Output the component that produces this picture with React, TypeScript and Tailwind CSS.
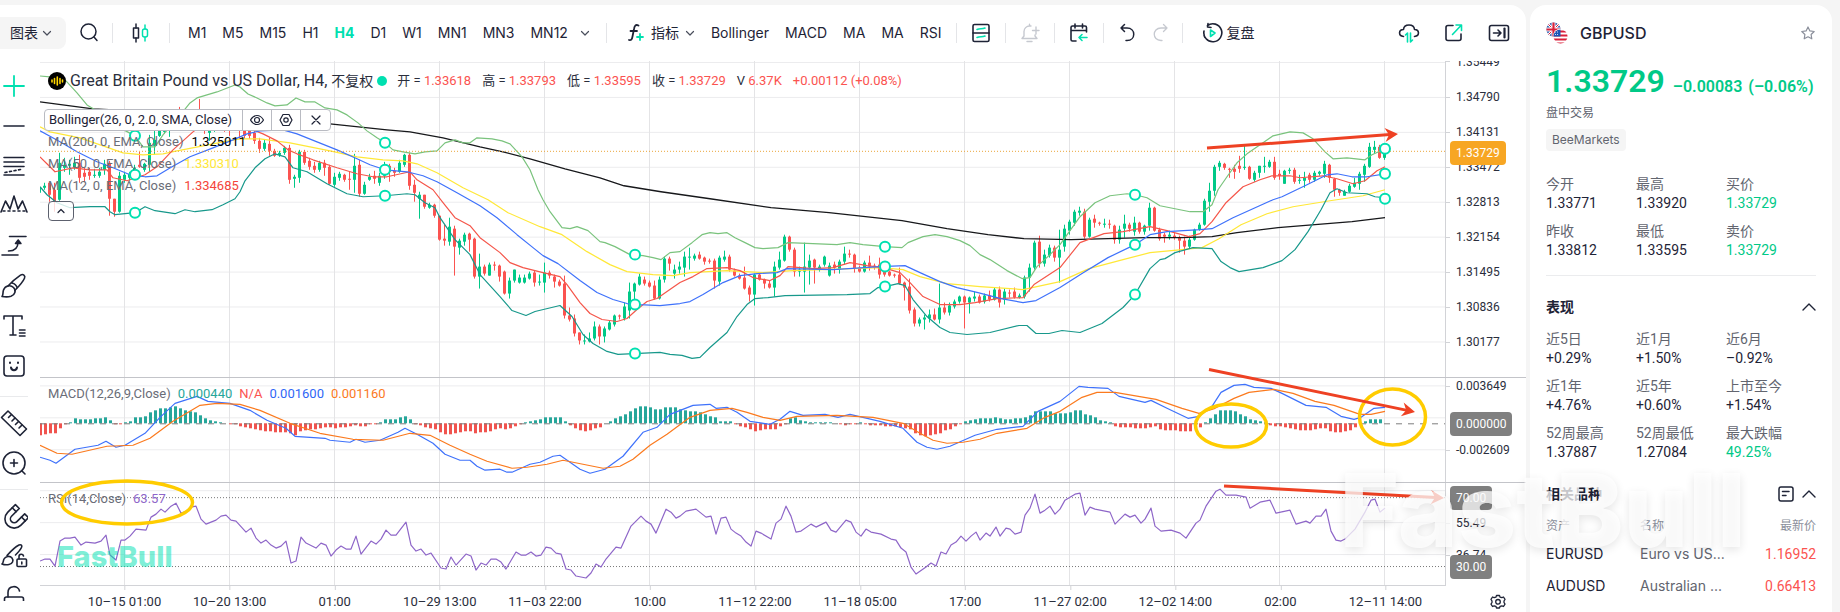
import React from "react";

/* ------------------------------------------------------------------ */
/* Chart space: x 40..1445, y 61..586, one bar every 5 units           */
/* ------------------------------------------------------------------ */
const X0 = 40;
const Y0 = 61;
const PLOT_W = 1405;
const PLOT_H = 525;

// colour, high, body top, body bottom, low
const CANDLES = `g185,188,193,195 g183,186,188,190 r182,183,195,202 r183,190,202,212 g153,163,200,201 g158,165,168,172 g160,164,166,175 g157,163,168,170 r155,163,178,183 r168,173,177,182
r168,172,176,180 g169,175,176,178 g168,172,176,178 g160,164,170,175 r161,163,199,216 r199,199,212,217 g172,176,212,213 g172,175,180,183 g172,174,178,181 g165,168,172,180
r152,165,167,168 g163,164,170,172 g135,143,165,172 g130,140,146,155 g127,128,136,137 g125,127,132,134 g122,125,131,137 g112,115,128,130 r107,112,124,128 g110,112,125,130
g112,116,120,126 g110,113,121,125 r99,112,126,129 r112,116,131,134 g120,123,133,141 g115,120,129,132 g115,118,126,130 r115,120,128,132 r120,124,131,136 g118,120,128,130
r118,126,131,139 r120,128,136,139 r125,129,136,139 r131,133,141,144 r138,141,149,153 g140,143,149,151 r138,144,151,156 r149,151,156,157 g151,153,155,157 g146,148,153,155
r145,148,180,184 g175,177,179,188 g150,152,178,183 r150,152,163,165 r158,161,167,170 r162,166,170,173 g161,163,170,172 r160,163,168,176 r165,167,184,185 g173,177,185,187
g172,174,178,181 r174,175,180,182 r172,179,180,190 g154,166,180,193 r160,165,194,197 g182,185,194,195 g174,177,180,181 r171,176,179,184 g173,176,183,186 g162,167,176,179
r164,166,172,182 r168,171,173,177 g160,163,172,173 g154,155,165,167 r153,155,186,190 r180,185,193,202 g192,195,199,219 r195,195,207,209 g203,205,208,209 r204,205,216,218
r216,216,240,241 r225,239,241,246 g218,227,242,246 r226,229,247,276 g239,241,248,255 g233,235,242,246 r233,234,240,252 r238,239,277,279 g254,267,277,289 r265,267,274,276
g263,265,276,276 r262,265,266,271 r265,266,277,282 r271,272,294,295 g278,281,294,299 g270,270,281,283 g275,278,283,284 g275,278,283,284 g272,274,279,280 r271,273,283,287
g275,282,283,286 g263,273,283,293 r271,273,276,279 r275,277,282,288 r280,282,286,287 r276,284,316,319 r308,316,320,322 r315,319,334,337 r333,333,341,345 g335,341,342,345
g333,339,342,343 g322,327,339,341 r325,327,337,345 g327,329,337,343 g321,323,330,331 g315,316,325,327 r315,316,317,320 g303,307,319,321 g283,292,311,319 g283,284,292,301
g274,277,285,286 r277,280,284,286 r281,283,287,288 r281,286,299,300 g277,280,299,300 g257,259,280,283 r257,259,264,271 g265,270,274,279 g262,267,270,274 g252,257,268,277
g248,257,258,270 g254,256,259,261 r252,255,259,260 r257,258,262,265 r259,261,262,264 r259,261,281,289 g256,258,282,286 g251,257,260,262 r255,257,270,272 r269,271,276,277
r274,276,279,280 r267,278,289,290 r286,288,295,302 g274,275,295,306 r273,275,280,281 r279,280,284,289 r281,284,288,289 g262,267,288,297 g252,260,268,270 g235,237,261,262
r236,237,250,252 r248,250,272,277 g267,270,272,277 g243,267,272,293 g255,261,268,285 r259,260,268,284 g265,267,270,272 g256,257,265,267 g263,266,276,277 r262,265,268,274
g260,262,270,274 g247,254,262,265 r250,254,255,258 r254,255,269,273 r266,268,272,273 g261,263,272,273 r256,263,267,271 r264,266,268,270 r258,265,275,279 r270,272,275,277
r271,272,276,277 r274,275,276,278 r268,275,284,285 r282,283,288,301 r279,287,311,314 r308,310,324,327 g318,320,324,327 g315,318,320,330 g310,315,319,323 r309,315,320,321
g284,308,320,324 r303,308,313,315 g303,306,313,316 g300,302,307,309 g296,297,302,304 r296,297,303,329 g297,298,303,314 g292,297,299,302 r295,297,303,304 g294,296,302,304
r291,296,300,302 g288,290,300,301 r287,290,303,308 g289,292,300,305 r290,293,294,298 r288,292,298,299 g294,296,298,299 g276,278,297,299 g264,268,278,292 g241,243,268,270
r236,242,264,268 g250,255,264,267 g245,248,256,258 r246,248,258,262 g230,250,258,283 g225,229,247,252 g220,222,231,235 g210,212,223,226 g207,211,213,216 r209,212,237,239
g218,220,237,238 r215,219,223,228 r222,223,224,226 g219,224,225,228 r220,224,225,229 r225,226,240,244 g226,230,240,244 g215,224,229,238 r223,225,229,232 g217,223,232,236
r222,223,232,234 g225,226,232,235 g203,208,226,231 r207,208,231,232 r228,230,239,241 r233,235,237,243 g231,235,237,240 r233,236,238,240 r236,238,241,253 r237,241,247,255
g236,240,247,249 g229,230,240,241 g223,225,230,231 g199,201,225,226 g183,191,202,212 g165,167,191,196 g161,163,167,171 r163,164,168,170 r168,169,170,178 r165,169,172,179
r156,166,169,173 g146,167,168,170 r166,167,179,180 g171,173,180,182 g166,166,173,178 g157,166,167,173 g160,162,167,168 r157,162,178,180 r170,174,176,180 g170,171,184,184
g168,170,171,174 r168,170,182,184 g175,180,181,184 g172,178,181,188 r173,175,180,183 g171,173,180,182 g171,172,174,176 g161,164,174,178 r164,165,178,183 r178,179,190,197
r189,190,193,196 g190,192,196,196 g184,186,192,193 g178,183,187,188 g172,174,184,190 g164,166,175,182 g143,147,167,168 g141,147,150,154 r145,147,158,159 g153,154,158,160`
  .split(/\s+/)
  .map((c) => ({ up: c[0] === "g", v: c.slice(1).split(",").map(Number) }));

const HISTOGRAM = [
  -12, -11, -10, -10, -5, -1, 1, 5, 4, 4, 4, 5, 5, 6, 3, -1, -1, 1, 2, 6, 6, 7, 11, 13, 15, 15, 16, 17, 15, 13,
  12, 11, 8, 5, 3, 2, 1, 0, -1, -1, -3, -4, -5, -6, -7, -8, -8, -9, -9, -9, -10, -12, -8, -7, -6, -6, -5, -4, -4, -5,
  -4, -4, -3, -2, -3, -3, -1, -1, 1, 4, 4, 4, 6, 7, 4, -1, -2, -4, -5, -6, -9, -11, -11, -10, -9, -8, -8, -10, -9, -9,
  -8, -6, -5, -6, -5, -3, -1, 1, 2, 3, 4, 6, 6, 6, 6, 2, -2, -5, -7, -8, -7, -5, -4, 0, 2, 5, 7, 9, 12, 15,
  17, 17, 16, 14, 14, 16, 16, 16, 14, 13, 12, 12, 11, 9, 7, 6, 2, 2, 2, -1, -3, -4, -6, -8, -7, -6, -6, -6, -3, -1,
  5, 6, 3, 2, 1, 1, 1, 1, 1, 0, -1, -2, -1, -1, 1, -1, -2, -2, -2, -3, -3, -3, -4, -5, -6, -10, -12, -13, -12, -11,
  -10, -7, -6, -3, -1, 2, 3, 4, 5, 5, 5, 6, 5, 4, 4, 5, 5, 6, 8, 12, 12, 12, 12, 10, 10, 10, 11, 13, 13, 9,
  8, 6, 3, 2, 1, -3, -4, -4, -4, -5, -5, -5, -4, -3, -6, -7, -7, -7, -8, -8, -8, -5, -4, 1, 5, 9, 13, 13, 13, 12,
  9, 7, 4, 3, 2, 1, -2, -3, -3, -4, -5, -6, -7, -7, -7, -6, -5, -5, -8, -9, -9, -8, -7, -4, -1, 2, 4, 4, 4,
];

const UPPER =
  "40,76 50,77 66,81 77,93 87,105 97,111 120,128 135,136 143,147 155,147 163,135 182,113 190,103 197,98 217,92 235,85 240,87 248,94 257,98 267,103 275,106 287,105 296,98 305,102 315,102 325,108 337,110 347,115 358,123 367,131 377,138 385,143 393,150 403,152 415,154 425,152 437,151 445,143 455,140 463,143 470,143 477,138 492,139 502,141 510,144 522,157 530,170 538,190 543,200 550,212 562,228 570,229 577,227 588,231 600,242 605,243 615,247 630,255 643,256 653,258 661,260 670,253 680,252 692,243 702,235 710,233 718,234 727,233 735,238 745,243 755,248 763,249 778,248 788,243 813,244 837,245 850,243 863,245 885,247 902,248 908,243 923,237 935,235 947,237 960,241 970,246 980,255 990,260 1007,271 1022,279 1030,278 1037,267 1050,255 1060,245 1080,217 1095,203 1110,196 1127,194 1135,195 1147,198 1160,206 1180,210 1190,212 1203,212 1212,205 1218,190 1227,177 1237,163 1247,154 1263,143 1273,136 1290,132 1303,133 1313,139 1325,152 1333,159 1347,158 1365,160 1372,155 1385,149";
const MIDDLE =
  "40,131 60,142 77,152 97,162 113,168 130,175 145,177 157,176 172,167 190,157 213,148 233,140 247,134 260,131 283,130 297,134 317,142 337,150 357,159 370,165 385,170 407,172 423,176 437,182 457,193 480,206 497,218 517,235 533,248 543,256 558,264 580,281 597,293 613,300 627,304 640,305 660,306 680,304 690,302 703,295 723,283 740,276 757,274 777,273 787,269 833,270 880,267 905,266 920,273 940,282 957,288 978,293 1001,299 1023,303 1036,301 1060,288 1082,274 1108,258 1135,245 1150,235 1167,232 1200,230 1212,229 1233,218 1273,200 1282,197 1307,185 1327,175 1337,174 1352,177 1367,177 1385,174";
const LOWER =
  "40,187 47,195 57,203 70,208 90,207 105,207 110,212 115,215 135,213 145,207 155,211 175,214 185,210 195,212 212,210 223,205 235,199 240,192 245,181 255,168 265,159 275,154 285,157 293,168 307,172 327,184 347,194 363,197 385,196 407,194 415,195 425,203 435,208 440,218 455,240 470,255 480,275 500,297 512,311 526,316 535,312 560,306 572,317 583,335 593,344 607,352 618,355 660,353 670,355 682,356 692,359 700,358 710,348 727,333 737,317 747,305 755,299 768,298 785,296 847,295 870,294 878,288 885,287 898,284 905,286 913,300 927,317 940,328 950,333 967,335 990,333 1019,326 1027,326 1036,334 1049,334 1062,331 1080,333 1102,324 1123,308 1135,295 1150,269 1160,260 1165,259 1175,253 1193,248 1212,249 1221,262 1230,268 1239,272 1263,268 1282,261 1295,250 1308,232 1321,210 1330,193 1337,189 1347,193 1367,194 1375,197 1385,198";
const EMA200 =
  "40,102 93,109 200,114 330,124 387,130 410,132 443,138 480,147 503,152 530,159 565,169 600,178 624,186 661,192 710,199 771,208 829,213 902,221 947,229 988,235 1024,239 1071,240 1145,238 1182,238 1212,237 1237,233 1278,228 1352,222 1385,218";
const EMA50 =
  "40,127 50,132 80,138 103,146 123,153 143,155 163,154 177,151 203,146 223,142 240,139 260,139 290,143 330,151 357,157 383,160 403,161 417,164 437,173 463,188 488,200 508,213 540,227 562,235 587,252 610,265 627,272 653,275 673,276 690,273 727,271 763,273 793,271 880,268 903,270 920,277 947,284 980,287 1023,290 1060,282 1089,269 1123,260 1150,253 1182,250 1202,248 1219,239 1241,225 1267,214 1293,207 1330,201 1350,198 1363,196 1385,190";
const EMA12 =
  "40,157 55,172 73,168 90,170 107,170 113,178 127,181 145,175 157,167 173,150 193,132 200,127 215,120 235,123 250,129 263,134 277,141 288,150 297,154 313,160 337,168 357,174 373,177 387,177 410,172 417,180 433,190 443,203 455,218 470,226 480,238 500,253 510,263 523,268 543,273 560,277 567,285 580,303 590,314 602,320 617,322 627,319 637,310 647,302 657,299 667,292 680,283 693,277 707,269 727,268 740,271 753,278 770,281 780,276 788,267 813,269 833,268 850,263 867,266 883,268 900,273 910,283 923,297 940,305 960,305 975,303 997,299 1023,298 1034,285 1060,268 1080,243 1104,234 1123,232 1150,227 1167,231 1189,237 1200,234 1212,222 1226,203 1243,187 1260,180 1272,176 1290,176 1300,178 1323,176 1337,179 1353,184 1365,181 1377,171 1385,167";
const MACD_LINE =
  "40,458 50,461 56,464 75,450 98,446 106,442 116,448 125,446 145,434 160,418 175,404 197,397 208,402 230,404 250,411 267,421 286,429 295,437 325,439 330,441 350,443 356,440 365,443 380,441 398,433 405,429 417,435 433,444 445,455 460,461 470,461 477,467 485,471 500,470 507,473 512,473 530,465 540,463 553,457 560,456 580,470 590,474 605,470 623,457 643,433 657,428 670,415 693,406 710,405 716,409 727,408 737,413 750,422 770,425 780,420 790,412 803,416 825,415 838,418 850,415 880,422 903,429 917,443 927,448 937,450 950,447 975,436 997,430 1023,427 1038,412 1060,402 1079,387 1088,388 1108,389 1119,397 1145,403 1151,401 1167,409 1188,419 1199,417 1212,407 1221,393 1234,386 1245,385 1254,388 1271,389 1282,394 1306,406 1326,408 1341,417 1354,420 1361,418 1374,409 1385,408";
const SIGNAL_LINE =
  "40,446 57,454 72,455 107,447 133,446 150,439 173,422 200,406 217,404 240,405 260,411 290,424 320,434 353,440 383,441 410,434 430,436 450,446 470,455 487,462 512,469 527,468 547,465 563,461 583,465 603,469 620,467 633,460 650,446 667,435 690,418 710,411 732,409 747,413 763,418 780,421 797,417 837,416 873,418 903,424 920,434 933,441 947,444 963,443 980,440 997,434 1027,429 1045,418 1060,412 1082,398 1097,393 1115,393 1156,400 1182,409 1199,414 1215,409 1234,399 1249,393 1274,390 1293,394 1315,402 1334,406 1360,415 1371,415 1385,412";
const RSI_LINE =
  "40,562 45,560 50,560 55,567 60,542 65,539 70,539 75,538 81,546 86,543 95,544 101,542 106,536 110,556 116,561 121,541 125,541 130,537 136,530 146,531 151,518 156,515 161,510 165,513 171,507 176,504 181,514 187,512 191,508 196,507 201,520 206,525 216,521 221,517 226,516 231,521 236,522 246,533 251,529 256,539 261,544 266,541 271,546 276,549 281,547 286,542 291,564 296,562 301,538 306,544 316,549 321,544 326,546 331,557 336,551 341,547 346,550 351,550 356,537 361,555 371,542 376,545 381,540 386,531 391,536 396,536 406,523 411,546 416,552 421,550 426,556 431,554 441,569 446,570 451,558 456,566 466,555 471,557 476,571 481,564 486,566 491,560 496,560 501,563 506,570 516,553 521,556 526,556 531,553 536,557 541,556 546,548 551,549 556,554 561,555 566,570 571,571 576,577 586,579 591,574 596,565 601,568 606,560 616,548 621,549 631,527 641,517 646,522 651,525 656,534 666,510 671,513 676,519 680,517 686,512 696,510 706,518 711,517 716,535 721,519 726,518 731,530 736,534 741,537 746,543 751,547 756,532 761,534 771,540 776,524 781,520 786,507 791,517 796,533 801,532 811,525 816,528 826,523 831,531 836,533 846,521 851,523 856,533 861,537 866,530 871,533 881,535 891,540 896,541 901,549 906,553 911,568 916,575 926,568 931,564 936,567 941,553 946,555 951,546 956,543 961,537 966,542 971,537 976,533 980,541 986,534 990,537 996,528 1000,537 1006,529 1010,530 1015,535 1021,533 1025,516 1030,509 1035,495 1040,514 1045,511 1050,507 1055,515 1060,510 1065,501 1075,495 1080,494 1085,516 1090,508 1095,510 1110,513 1115,525 1125,515 1130,518 1135,516 1141,524 1145,520 1151,509 1155,527 1161,532 1171,531 1180,534 1186,539 1196,524 1200,521 1206,507 1216,492 1220,490 1226,496 1236,496 1246,498 1250,509 1260,503 1270,501 1276,514 1290,511 1296,525 1306,522 1310,524 1316,517 1321,517 1326,510 1331,532 1336,541 1341,542 1345,540 1355,530 1365,513 1371,501 1375,500 1380,513 1385,509";

const HANDLES = [
  [135, 136], [135, 175], [135, 213], [385, 143], [385, 170], [385, 196],
  [635, 255], [635, 305], [635, 354], [885, 247], [885, 267], [885, 287],
  [1135, 195], [1135, 245], [1135, 295], [1385, 149], [1385, 174], [1385, 199],
];

const GRID_X = Array.from({ length: 13 }, (_, i) => 124.5 + i * 105);
const GRID_Y = [62.5, 97.5, 132.5, 167.5, 202.5, 237.5, 272.5, 307.5, 342.5, 386.5, 418.5, 450.5, 491.5, 523.5, 555.5];

const AXIS_LABELS: [string, number][] = [
  ["1.35449", 62], ["1.34790", 97], ["1.34131", 132], ["1.33472", 167], ["1.32813", 202], ["1.32154", 237],
  ["1.31495", 272], ["1.30836", 307], ["1.30177", 342], ["0.003649", 386], ["-0.002609", 450], ["55.49", 523], ["36.74", 555],
];

const TIMES = [
  "10–15 01:00", "10–20 13:00", "01:00", "10–29 13:00", "11–03 22:00", "10:00", "11–12 22:00",
  "11–18 05:00", "17:00", "11–27 02:00", "12–02 14:00", "02:00", "12–11 14:00",
];

const pctY = (y: number) => `${((y - Y0) / PLOT_H) * 100}%`;
const pctX = (x: number) => `${((x - X0) / PLOT_W) * 100}%`;

/* ------------------------------------------------------------------ */
/* Icons                                                               */
/* ------------------------------------------------------------------ */
const INK = "#1e2336";
const MINT = "#00e0b0";

function Icon({ w = 20, h = 20, sw = 1.6, color = INK, children }: {
  w?: number; h?: number; sw?: number; color?: string; children: React.ReactNode;
}) {
  return (
    <svg className="block shrink-0" width={w} height={h} viewBox={`0 0 ${w} ${h}`} fill="none" stroke={color}
      strokeWidth={sw} strokeLinecap="round" strokeLinejoin="round" aria-hidden="true">
      {children}
    </svg>
  );
}

const Chevron = () => (
  <Icon w={10} h={10} sw={1.2} color="#4a4e5c"><path d="M1.5 3.5 5 7l3.5-3.5" /></Icon>
);
const ChevronUp = () => (
  <Icon w={14} h={14} sw={1.4}><path d="M1 10l6-6 6 6" /></Icon>
);
const Divider = () => <span className="h-5 w-px shrink-0 bg-[#e4e5e8]" />;

const TOOLS: { label: string; icon: React.ReactNode }[][] = [
  [
    { label: "十字光标", icon: <path d="M14 4v20M4 14h20" stroke={MINT} strokeWidth="1.8" /> },
    { label: "线段", icon: <path d="M4 14h20" /> },
    { label: "平行线", icon: <><path d="M4 5.5h20M4 10h20M4 14.5h20M4 23h20" /><path d="M5 20.5 23 17" strokeDasharray="2 2.6" /></> },
    { label: "形态", icon: <><path d="M1 20 5.500 9l4.500 8L14 4l4 13 4.500-8L27 20" /><path d="M3 19h22" strokeDasharray="2 3" /></> },
    { label: "预测", icon: <><path d="M9.500 4.500H26M2 23h16M8.500 19c7 0 9.500-3.500 9.500-9" /><path d="m15.500 11.500 2.700-3.500 2.700 3.500z" fill={INK} /></> },
    { label: "画笔", icon: <><path d="M2 24.500c1.500-1.500.500-3.500 1.500-6.500 1.500-4.500 7-5.500 10-2.500s1.500 7.500-2.500 8.800c-3 .900-6 .700-9 .200z" /><path d="M8 14C12 9.500 16.500 6 20.500 3.200c2.500-1.700 5.200.300 4 3-1.700 4-5.500 8-9.700 12.300M12 11c2 .5 4.500 2.500 5.200 5" /></> },
    { label: "文字", icon: <><path d="M4 7V4h18v3M13 4v19M10 23h6" /><path d="M19.500 18H25M19.500 21H25M19.500 24H25" /></> },
    { label: "表情", icon: <><rect x="4" y="4" width="20" height="20" rx="3" /><path d="M10 10.500v.5M18 10.500v.5M11 15.500c.5 3.500 5.500 3.500 6 0" strokeWidth="2" /></> },
  ],
  [
    { label: "测量", icon: <><path d="M8 2 26.500 20 20 26.500 1.500 8.500z" /><path d="m11.500 5.500-3 3M15 9l-3 3M18.500 12.500l-3 3M22 16l-3 3" /></> },
    { label: "放大", icon: <><circle cx="14" cy="14" r="11" /><path d="m21.500 21.500 3.500 3.500M14 10.500v7M10.500 14h7" /></> },
  ],
  [
    { label: "磁铁", icon: <g transform="translate(1 1) rotate(45 13 15)"><path d="M4.500 4.500h5.500v11a3.800 3.800 0 0 0 7.600 0v-11H23v11a9.250 9.250 0 0 1-18.500 0z" /><path d="M4.500 9H10M17.600 9H23" /></g> },
    { label: "锁定画笔", icon: <><path d="M2 22c1.500-1 1-3 2-5 1.500-3 6-3.500 8-1s.5 6-3 6.500c-2.500.5-5 .3-7-.5zM7 13.500C11 9 15 5 19 3c2-.8 3.500.5 2.500 2.500-1 2-3.500 5-6 7.500" /><rect x="17" y="17" width="9.500" height="7.500" rx="1" /><path d="M19 17v-2.500c0-3 4-3 4.500-.5M21.800 20v2" /></> },
    { label: "锁定", icon: <><rect x="4.500" y="15" width="19" height="12" rx="2" /><path d="M8 15v-4.500C8 3 18.500 3 19.500 9" /></> },
  ],
];

function Arrow({ x1, y1, x2, y2 }: { x1: number; y1: number; x2: number; y2: number }) {
  const a = Math.atan2(y2 - y1, x2 - x1);
  return (
    <g fill="#ee4123" stroke="none">
      <line x1={x1} y1={y1} x2={x2 - 8 * Math.cos(a)} y2={y2 - 8 * Math.sin(a)} stroke="#ee4123" strokeWidth="3" />
      <path d="M0 0-13-7-9 0-13 7z" transform={`translate(${x2} ${y2}) rotate(${(a * 180) / Math.PI})`} />
    </g>
  );
}

/* ------------------------------------------------------------------ */
/* Toolbar                                                             */
/* ------------------------------------------------------------------ */
function Toolbar() {
  return (
    <header className="flex h-14 shrink-0 items-center font-['Inter','Noto_Sans_CJK_SC',sans-serif] text-sm text-[#1e2336]">
      <button className="flex h-8 items-center gap-1 rounded-r-lg bg-[#f5f5f5] pl-2.5 pr-3.5">
        图表<Chevron />
      </button>
      <button aria-label="搜索" className="ml-3.5">
        <Icon sw={1.5}><circle cx="8.5" cy="8.5" r="7.5" /><path d="m14 14 3 3.500" /></Icon>
      </button>
      <div className="ml-3 flex items-center gap-[18px]">
        <Divider />
        <button aria-label="K线类型">
          <Icon sw={1.5}>
            <rect x="2.5" y="5" width="5" height="10" /><path d="M5 1v4M5 15v4" />
            <g stroke={MINT}><rect x="11.5" y="6" width="5" height="8" rx="2" /><path d="M14 2v4M14 14v4" /></g>
          </Icon>
        </button>
        <Divider />
      </div>
      <nav className="ml-[18px] flex items-center gap-4">
        {["M1", "M5", "M15", "H1", "H4", "D1", "W1", "MN1", "MN3", "MN12"].map((t) => (
          <button key={t} className={t === "H4" ? "font-bold text-[#00e0b0]" : ""}>{t}</button>
        ))}
        <button aria-label="更多周期" className="-ml-1"><Chevron /></button>
        <Divider />
      </nav>
      <div className="ml-5 flex items-center gap-4">
        <button className="flex items-center gap-1.5">
          <Icon w={18} h={20} sw={1.8}>
            <path d="M11.5 2.5C8.500 1 7.500 3 7 6L5.500 13.500C5 16.500 4 17.500 2 17M3.500 8H10" />
            <path d="M13 11v6M10 14h6" stroke={MINT} />
          </Icon>
          指标<Chevron />
        </button>
        <button>Bollinger</button>
        <button>MACD</button>
        <button>MA</button>
        <button>MA</button>
        <button>RSI</button>
      </div>
      <div className="ml-3.5 flex items-center gap-[14px]">
        <Divider />
        <button aria-label="模板">
          <Icon><rect x="2" y="1.5" width="16" height="17" rx="1.5" /><path d="M2 10h16" /><path d="M6 6.500c3-1.500 5 0 8-1.500M6 14.500c3-1.500 5 0 8-1.500" stroke={MINT} /></Icon>
        </button>
        <Divider />
        <button aria-label="提醒">
          <Icon color="#c6c9d0" sw={1.4}><path d="M2 15.500h15l-2-2.500v-1M2 15.500 4 13V8.500C4 5.500 6.500 3 9.500 3H11M9.500 3V1.200M7 18.500h5M16 4v7M12.500 7.500H19" /></Icon>
        </button>
        <Divider />
        <button aria-label="回到日期">
          <Icon><path d="M17.500 9V4.500c0-1-.5-1.500-1.500-1.500H3.500C2.500 3 2 3.500 2 4.500v12c0 1 .5 1.500 1.500 1.500H7M2 7.500h15.500M6 1v4M13.500 1v4" /><path d="M18 14.500h-8M13 11.500l-3 3 3 3" stroke={MINT} /></Icon>
        </button>
        <Divider />
      </div>
      <div className="ml-3.5 flex items-center gap-3">
        <button aria-label="撤销">
          <Icon sw={1.5}><path d="M6.500 1.500 3 5l3.500 3.500M3 5h6c9 0 9 12.500 0 12.500H8" /></Icon>
        </button>
        <button aria-label="重做">
          <Icon sw={1.3} color="#c6c9d0"><path d="M13.500 1.500 17 5l-3.500 3.500M17 5h-6C2 5 2 17.500 11 17.500h1" /></Icon>
        </button>
        <Divider />
      </div>
      <button className="ml-[18px] flex items-center gap-1">
        <Icon w={22} h={22}>
          <path d="M6.500 3.500A9 9 0 1 1 3 9M3 13a9 9 0 0 0 1 2.500M7 1.500 6.500 5l3.500.5" />
          <path d="m9.500 8 4.500 3-4.500 3.500z" stroke={MINT} />
        </Icon>
        复盘
      </button>
      <div className="ml-auto mr-4 flex items-center gap-6">
        <button aria-label="同步">
          <Icon w={22} h={22}>
            <path d="M5.500 14.500C0 14 .5 7.500 5.500 7.500 6 1.500 16 1.500 16.500 7.500c5 0 5.500 6.500 0 7" />
            <path d="M9.500 20v-9L7.500 13M12.500 11v9l2-2" stroke={MINT} />
          </Icon>
        </button>
        <button aria-label="分享">
          <Icon><path d="M9 2.500H4C2.500 2.500 2 3 2 4.500v11c0 1.500.5 2 2 2h11c1.500 0 2-.5 2-2V11" /><path d="M8.500 11.500 17 2.500M12 2h5.500v5.500" stroke={MINT} /></Icon>
        </button>
        <button aria-label="收起侧栏">
          <Icon w={22} h={20}><rect x="1.5" y="2.5" width="19" height="15" rx="2" /><path d="M16.500 5.500v9" strokeWidth="2.2" /><path d="M5.500 10H13M10 7l3 3-3 3" /></Icon>
        </button>
      </div>
    </header>
  );
}

/* ------------------------------------------------------------------ */
/* Chart                                                               */
/* ------------------------------------------------------------------ */
function Plot() {
  const line = (points: string, stroke: string, width = 1.2) => (
    <polyline points={points} stroke={stroke} strokeWidth={width} fill="none" strokeLinejoin="round" />
  );
  return (
    <svg className="absolute inset-0 size-full" viewBox={`${X0} ${Y0} ${PLOT_W} ${PLOT_H}`} preserveAspectRatio="none" aria-hidden="true">
      <g stroke="#ececee">
        {GRID_Y.map((y) => <line key={y} x1="40" x2="1445" y1={y} y2={y} />)}
      </g>
      <g stroke="#e4e4e6">
        {GRID_X.map((x) => <line key={x} x1={x} x2={x} y1="61" y2="586" />)}
      </g>
      {CANDLES.map(({ up, v: [hi, top, bot, lo] }, i) => (
        <g key={i} fill={up ? "#00c987" : "#fb5350"}>
          <rect x={39 + i * 5} y={hi} width="1" height={Math.max(lo - hi, 1)} />
          <rect x={38 + i * 5} y={top} width="3" height={Math.max(bot - top, 1)} />
        </g>
      ))}
      {line(EMA200, "#17181b", 1.3)}
      {line(EMA50, "#ffe838")}
      {line(EMA12, "#f5564a")}
      {line(UPPER, "#7ac37d")}
      {line(MIDDLE, "#3f72fb")}
      {line(LOWER, "#17988b")}
      <line x1="40" x2="1445" y1="151.5" y2="151.5" stroke="#eaa63a" strokeDasharray="1 2" />

      {HISTOGRAM.map((h, i) =>
        h === 0 ? null : (
          <rect key={i} x={39 + i * 5} width="3" y={h > 0 ? 424 - h : 424} height={Math.abs(h)} fill={h > 0 ? "#26a69a" : "#f0544f"} />
        ),
      )}
      <line x1="40" x2="1445" y1="424.5" y2="424.5" stroke="#7d7d7d" strokeDasharray="6 6" />
      {line(MACD_LINE, "#3f72fb")}
      {line(SIGNAL_LINE, "#fb7a1e")}
      <g stroke="#777" strokeDasharray="1 2">
        <line x1="40" x2="1445" y1="498.5" y2="498.5" />
        <line x1="40" x2="1445" y1="567.5" y2="567.5" />
      </g>
      {line(RSI_LINE, "#8e66c8")}
      <g fill="#fff" stroke="#00e0b0" strokeWidth="2">
        {HANDLES.map(([x, y], i) => <circle key={i} cx={x} cy={y} r="5" />)}
      </g>
    </svg>
  );
}

function Ohlc({ name, value }: { name: string; value: string }) {
  return <span>{name} <span className="text-[#fb5350]">{value}</span></span>;
}

function Legend() {
  const averages = [
    ["MA(200, 0, EMA, Close)", "1.325011", "text-black"],
    ["MA(50, 0, EMA, Close)", "1.330310", "text-[#ffe838]"],
    ["MA(12, 0, EMA, Close)", "1.334685", "text-[#f5453a]"],
  ];
  return (
    <div className="absolute left-1 top-2.5 flex flex-col items-start text-[13px]">
      <div className="flex h-5 items-center whitespace-nowrap pl-1">
        <Icon w={18} h={18} sw={1.6} color="#ffd500">
          <circle cx="9" cy="9" r="9" fill="#000" stroke="none" />
          <path d="M4 8v2M6.500 6.500v5M9.300 5v8M12 6.500v5M14.500 8v2" />
        </Icon>
        <h1 className="ml-1 text-base text-[#2a2e3c]">Great Britain Pound vs US Dollar, H4, <span className="text-sm">不复权</span></h1>
        <span className="ml-1 size-2.5 rounded-full bg-[#00e0b0]" />
        <div className="ml-2.5 flex gap-[11px] text-[#2a2e3c]">
          <Ohlc name="开 =" value="1.33618" />
          <Ohlc name="高 =" value="1.33793" />
          <Ohlc name="低 =" value="1.33595" />
          <Ohlc name="收 =" value="1.33729" />
          <Ohlc name="V" value="6.37K" />
          <span className="text-[#fb5350]">+0.00112 (+0.08%)</span>
        </div>
      </div>
      <div className="mt-[18px] flex h-[22px] items-stretch divide-x divide-[#b9bbc2] rounded border border-[#b9bbc2] bg-white text-[#1e2336]">
        <span className="flex items-center whitespace-nowrap pl-1 pr-2.5">Bollinger(26, 0, 2.0, SMA, Close)</span>
        <button aria-label="隐藏指标" className="flex w-[29px] items-center justify-center">
          <Icon w={16} h={14} sw={1.2}><path d="M1.500 7C5 1 11 1 14.500 7 11 13 5 13 1.500 7z" /><circle cx="8" cy="7" r="2.5" /></Icon>
        </button>
        <button aria-label="指标设置" className="flex w-[29px] items-center justify-center">
          <Icon w={14} h={14} sw={1.2}><path d="M4 1.500h6L13 7l-3 5.500H4L1 7z" /><circle cx="7" cy="7" r="2.2" /></Icon>
        </button>
        <button aria-label="删除指标" className="flex w-[29px] items-center justify-center">
          <Icon w={10} h={10} sw={1.2}><path d="m1 1 8 8M9 1 1 9" /></Icon>
        </button>
      </div>
      {averages.map(([name, value, tone]) => (
        <div key={name} className="flex h-[22px] items-center gap-2 whitespace-nowrap pl-1 text-[#6a6d78]">
          <span>{name}</span><span className={tone}>{value}</span>
        </div>
      ))}
      <button aria-label="收起指标" className="ml-1 mt-1 flex h-5 w-[26px] items-center justify-center rounded border border-[#5d616e] bg-white/80">
        <Icon w={8} h={8} sw={1.2}><path d="M1 5.500 4 2.500l3 3" /></Icon>
      </button>
    </div>
  );
}

function AxisTag({ text, y, tone }: { text: string; y: number; tone: string }) {
  return (
    <span className={`absolute left-1 flex h-6 -translate-y-1/2 items-center rounded-sm px-1.5 text-white ${tone}`} style={{ top: pctY(y) }}>
      {text}
    </span>
  );
}

function Chart() {
  return (
    <section className="relative flex min-w-0 flex-1 flex-col overflow-hidden">
      <div className="relative flex min-h-0 flex-1">
        <div className="relative min-w-0 flex-1 border-b border-r border-[#d2d3d7]">
          <Plot />
          <Legend />
          <div className="absolute left-2 flex -translate-y-1/2 gap-[7px] text-[13px] text-[#6a6d78]" style={{ top: pctY(395) }}>
            <span>MACD(12,26,9,Close)</span>
            <span className="text-[#26a69a]">0.000440</span>
            <span className="text-[#fb5350]">N/A</span>
            <span className="text-[#2f67f6]">0.001600</span>
            <span className="text-[#fb7a1e]">0.001160</span>
          </div>
          <div className="absolute left-2 flex -translate-y-1/2 gap-[7px] text-[13px] text-[#6a6d78]" style={{ top: pctY(500) }}>
            <span>RSI(14,Close)</span>
            <span className="text-[#8e66c8]">63.57</span>
          </div>
          <div className="absolute left-[17px] -translate-y-1/2 font-['Inter',sans-serif] text-[29px] font-extrabold leading-none text-[#00e0b0]/50" style={{ top: pctY(557) }}>
            FastBull
          </div>
        </div>
        <div className="relative w-20 shrink-0 overflow-hidden text-xs text-[#2a2e3c]">
          {AXIS_LABELS.map(([text, y]) => (
            <div key={text} className="absolute left-0 flex -translate-y-1/2 items-center gap-1.5" style={{ top: pctY(y) }}>
              <span className="h-px w-1 bg-[#d2d3d7]" />
              {text}
            </div>
          ))}
          <AxisTag text="1.33729" y={153} tone="bg-[#f7a623]" />
          <AxisTag text="0.000000" y={424} tone="bg-[#808080]" />
          <AxisTag text="70.00" y={498} tone="bg-[#808080]" />
          <AxisTag text="30.00" y={567} tone="bg-[#808080]" />
        </div>
        <span className="absolute inset-x-0 h-px bg-[#c3c4c9]" style={{ top: pctY(377) }} />
        <span className="absolute inset-x-0 h-px bg-[#c3c4c9]" style={{ top: pctY(482) }} />
      </div>
      <div className="flex h-[26px] shrink-0 text-[13px] leading-4 text-[#2a2e3c]">
        <div className="relative flex-1">
          {TIMES.map((t, i) => (
            <span key={i} className="absolute top-2 -translate-x-1/2 whitespace-nowrap" style={{ left: pctX(GRID_X[i]) }}>
              <span className="absolute -top-2 left-1/2 h-1 w-px bg-[#d2d3d7]" />
              {t}
            </span>
          ))}
        </div>
        <div className="flex w-20 items-center pl-11">
          <button aria-label="坐标设置" className="mt-1.5">
            <Icon w={16} h={16} sw={1.3}>
              <path d="M6.500 1.500h3l.6 1.700 1.800.5 1.600-.7L15 5.300 14 7v1.500l1 1.700-1.500 2.300-1.600-.7-1.800.5-.6 1.700h-3l-.6-1.700-1.800-.5-1.600.7L1 10.200l1-1.700V7L1 5.300 2.500 3l1.600.7 1.800-.5z" />
              <circle cx="8" cy="7.800" r="2.300" />
            </Icon>
          </button>
        </div>
      </div>
      <svg className="pointer-events-none absolute inset-0 size-full" viewBox="40 61 1486 551" preserveAspectRatio="none" fill="none" aria-hidden="true">
        <g stroke="#ffcc00" strokeWidth="3.5">
          <ellipse cx="127" cy="502.5" rx="65.5" ry="21.5" />
          <ellipse cx="1231" cy="425.5" rx="35.5" ry="21.5" />
          <ellipse cx="1392.5" cy="417" rx="33" ry="28" />
        </g>
        <Arrow x1={1207} y1={148} x2={1398} y2={134} />
        <Arrow x1={1209} y1={369.5} x2={1415} y2={412} />
        <Arrow x1={1224} y1={486} x2={1444} y2={498} />
      </svg>
    </section>
  );
}

/* ------------------------------------------------------------------ */
/* Side panel                                                          */
/* ------------------------------------------------------------------ */
type Stat = [string, string, boolean?];
const QUOTE: Stat[] = [
  ["今开", "1.33771"], ["最高", "1.33920"], ["买价", "1.33729", true],
  ["昨收", "1.33812"], ["最低", "1.33595"], ["卖价", "1.33729", true],
];
const PERFORMANCE: Stat[] = [
  ["近5日", "+0.29%"], ["近1月", "+1.50%"], ["近6月", "–0.92%"],
  ["近1年", "+4.76%"], ["近5年", "+0.60%"], ["上市至今", "+1.54%"],
  ["52周最高", "1.37887"], ["52周最低", "1.27084"], ["最大跌幅", "49.25%", true],
];

function Stats({ items }: { items: Stat[] }) {
  return (
    <dl className="grid grid-cols-3 gap-y-[9px] text-sm leading-[19px]">
      {items.map(([name, value, up]) => (
        <div key={name}>
          <dt className="text-[#62656f]">{name}</dt>
          <dd className={up ? "text-[#00c987]" : "text-[#1e2336]"}>{value}</dd>
        </div>
      ))}
    </dl>
  );
}

function Flags() {
  return (
    <svg className="block" width="22" height="22" viewBox="0 0 22 22" aria-hidden="true">
      <clipPath id="uk"><circle cx="7.5" cy="7.5" r="7" /></clipPath>
      <clipPath id="us"><circle cx="14.5" cy="14.5" r="7" /></clipPath>
      <g clipPath="url(#uk)">
        <path d="M0 0h15v15H0z" fill="#1a4aa0" />
        <path d="m0 0 15 15M15 0 0 15" stroke="#fff" strokeWidth="2.6" />
        <path d="m0 0 15 15M15 0 0 15" stroke="#d91f3a" strokeWidth="1" />
        <path d="M7.500 0v15M0 7.500h15" stroke="#fff" strokeWidth="4" />
        <path d="M7.500 0v15M0 7.500h15" stroke="#d91f3a" strokeWidth="2.2" />
      </g>
      <circle cx="14.5" cy="14.5" r="7.7" fill="#fff" />
      <g clipPath="url(#us)">
        <path d="M7 7h15v15H7z" fill="#fff" />
        <path d="M7 9.500h15M7 13.500h15M7 17.500h15M7 21.500h15" stroke="#d91f3a" strokeWidth="2" />
        <path d="M7 7h7.500v7.500H7z" fill="#1a56b8" />
        <path d="M9 10h4M9 12.500h4" stroke="#fff" strokeWidth=".8" strokeDasharray="1 1" />
      </g>
    </svg>
  );
}

function SidePanel() {
  const rows: [string, string, string, string][] = [
    ["EURUSD", "Euro vs US...", "1.16952", "text-[#fb5350]"],
    ["AUDUSD", "Australian ...", "0.66413", "text-[#fb5350]"],
    ["NZDUSD", "New Zealand...", "0.58016", "text-[#00c987]"],
  ];
  return (
    <aside className="flex w-[302px] shrink-0 flex-col overflow-hidden rounded-t-2xl bg-white px-4">
      <div className="flex h-14 shrink-0 items-center">
        <Flags />
        <h2 className="ml-3 font-['Inter',sans-serif] text-base font-medium text-[#1e2336]">GBPUSD</h2>
        <button aria-label="收藏" className="ml-auto">
          <Icon w={16} h={16} sw={1.2} color="#8b8f9b"><path d="m8 2 1.900 3.900 4.300.6-3.100 3 .7 4.300L8 11.800l-3.800 2 .7-4.300-3.100-3 4.300-.6z" /></Icon>
        </button>
      </div>
      <div className="flex h-10 shrink-0 items-baseline gap-2 whitespace-nowrap font-semibold text-[#00c987]">
        <span className="text-[32px] leading-10">1.33729</span>
        <span className="flex gap-1.5 text-base"><span>–0.00083</span><span>(–0.06%)</span></span>
      </div>
      <p className="mt-1 text-xs leading-4 text-[#62656f]">盘中交易</p>
      <p className="mt-2 flex h-[22px] shrink-0 items-center self-start rounded bg-[#f5f5f5] px-1.5 font-['Inter',sans-serif] text-xs text-[#62656f]">BeeMarkets</p>
      <div className="mt-6 border-b border-[#ebecee] pb-[15px]"><Stats items={QUOTE} /></div>
      <div className="mb-[11px] mt-[19px] flex h-6 shrink-0 items-center justify-between">
        <h3 className="text-sm font-bold text-[#1e2336]">表现</h3>
        <button aria-label="收起表现"><ChevronUp /></button>
      </div>
      <Stats items={PERFORMANCE} />
      <div className="mt-5 flex h-6 shrink-0 items-center justify-between">
        <h3 className="text-sm font-bold text-[#1e2336]">相关品种</h3>
        <div className="flex items-center gap-2">
          <button aria-label="列表"><Icon w={16} h={16} sw={1.5}><rect x="1" y="1" width="14" height="14" rx="2" /><path d="M4.500 5.500H11M4.500 9.500H8" /></Icon></button>
          <button aria-label="收起相关品种"><ChevronUp /></button>
        </div>
      </div>
      <table className="mt-2 w-full table-fixed text-sm">
        <thead className="text-xs text-[#8b8f9b]">
          <tr className="h-6">
            <th className="w-[94px] p-0 text-left font-normal">资产</th>
            <th className="p-0 text-left font-normal">名称</th>
            <th className="w-20 p-0 text-right font-normal">最新价</th>
          </tr>
        </thead>
        <tbody>
          {rows.map(([symbol, name, price, tone]) => (
            <tr key={symbol} className="h-8 font-['Inter',sans-serif]">
              <td className="p-0 text-[#1e2336]">{symbol}</td>
              <td className="whitespace-nowrap p-0 text-[#62656f]">{name}</td>
              <td className={`p-0 text-right font-['Roboto',sans-serif] ${tone}`}>{price}</td>
            </tr>
          ))}
        </tbody>
      </table>
    </aside>
  );
}

export default function App() {
  return (
    <div className="relative flex h-screen gap-1 overflow-hidden bg-[#f5f5f5] pr-2 pt-[5px] font-['Roboto','Noto_Sans_CJK_SC',sans-serif]">
      <main className="flex min-w-0 flex-1 flex-col overflow-hidden rounded-tr-2xl bg-white">
        <Toolbar />
        <div className="flex min-h-0 flex-1">
          <div className="flex w-10 shrink-0 flex-col overflow-hidden pb-[11px]">
            <div className="min-h-0 flex-1 overflow-hidden pt-[5px]">
              {TOOLS.map((group, g) => (
                <div key={g} className={g ? "mr-3 mt-1.5 border-t border-[#e9eaec] pt-1.5" : "mb-2.5 mr-3"}>
                  {group.map(({ label, icon }) => (
                    <button key={label} aria-label={label} className="flex h-10 items-center">
                      <Icon w={28} h={28}>{icon}</Icon>
                    </button>
                  ))}
                </div>
              ))}
            </div>
          </div>
          <Chart />
        </div>
      </main>
      <SidePanel />
      <div className="pointer-events-none absolute right-[94px] top-[459px] font-['Inter',sans-serif] text-[102px] font-extrabold leading-none text-white/75 [text-shadow:0_3px_10px_rgba(0,0,0,0.1)]">
        FastBull
      </div>
    </div>
  );
}
